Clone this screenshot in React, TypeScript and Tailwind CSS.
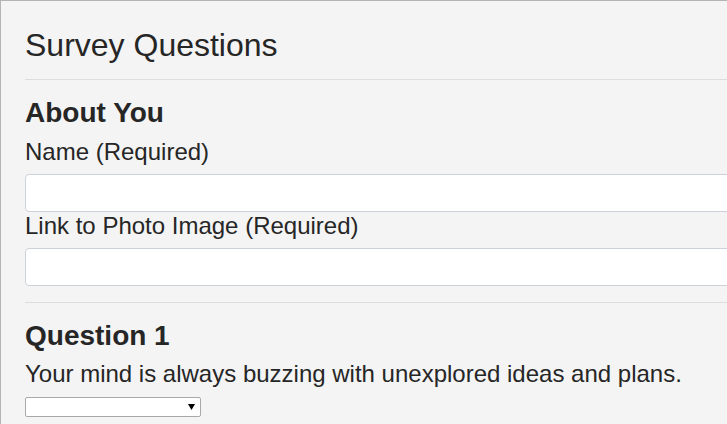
import React from 'react';

const Field: React.FC<{ label: string }> = ({ label }) => (
    <div>
        <label className="block text-[24px] leading-[27px]">{label}</label>
        <input
            type="text"
            className="mt-[9px] block w-full h-[38px] bg-white border border-[#cdd2d8] rounded-[4px]"
        />
    </div>
);

const App: React.FC = () => {
    return (
        <div className="w-[727px] h-[424px] overflow-hidden bg-white">
            <div
                className="w-[800px] min-h-[424px] border-l border-t border-[#b4b4b4] bg-[#f4f4f4] pl-6 pr-10 pt-[26px] text-[#262626]"
                style={{ fontFamily: '"Liberation Sans", Arial, sans-serif' }}
            >
                {/* Header */}
                <h1 className="text-[32px] leading-[36px] font-normal">Survey Questions</h1>
                <hr className="mt-4 border-0 border-t border-[#dddddd]" />

                {/* About You */}
                <h2 className="mt-[17px] text-[28px] leading-[32px] font-bold">About You</h2>
                <div className="mt-[9px]">
                    <Field label="Name (Required)" />
                    <Field label="Link to Photo Image (Required)" />
                </div>
                <hr className="mt-4 border-0 border-t border-[#dddddd]" />

                {/* Question 1 */}
                <h2 className="mt-[17px] text-[28px] leading-[32px] font-bold">Question 1</h2>
                <p className="mt-[8px] text-[24px] leading-[27px]">
                    Your mind is always buzzing with unexplored ideas and plans.
                </p>
                <div className="relative mt-[10px] w-[176px] h-[20px]">
                    <select className="appearance-none block w-full h-full bg-white border border-[#a9a9a9] rounded-[2px] text-[13px]">
                        <option value=""></option>
                    </select>
                    <svg
                        className="absolute right-[6px] top-[7px] pointer-events-none"
                        width="7"
                        height="6"
                        viewBox="0 0 7 6"
                    >
                        <path d="M0 0 H7 L3.5 6 Z" fill="#000" />
                    </svg>
                </div>
            </div>
        </div>
    );
};

export default App;
